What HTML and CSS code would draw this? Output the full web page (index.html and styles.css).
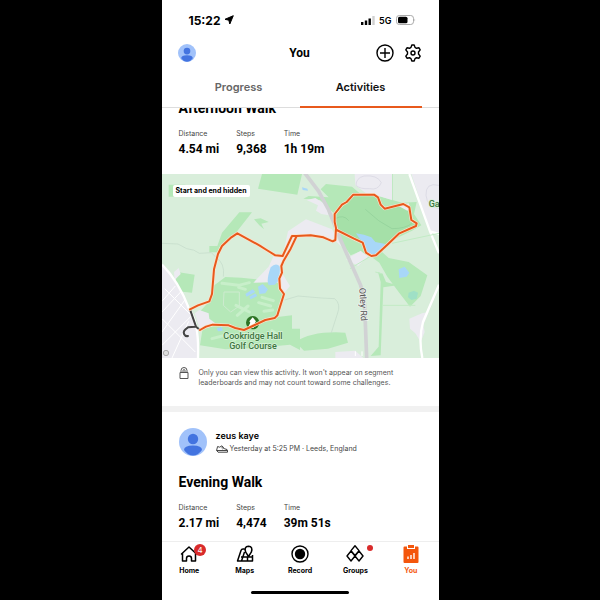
FILE: index.html
```
<!DOCTYPE html>
<html lang="en">
<head>
    <meta charset="UTF-8">
    <meta name="viewport" content="width=device-width, initial-scale=1.0">
    <title>You - Activities</title>
    <link rel="stylesheet" href="styles.css">
</head>
<body>
    <div class="phone">
        <header class="top">
            <div class="status-bar">
                <span class="clock">15:22
                    <svg width="10" height="10" viewBox="0 0 10 10"><path stroke="#000" stroke-linejoin="round" d="M9.300 .7 5.800 9 4.800 5.200 1 4.300z"/></svg>
                </span>
                <span class="signal">
                    <svg width="14" height="9" viewBox="0 0 14 9"><path d="M0 6h2.400v3H0zM3.800 4.500h2.400V9H3.800zM7.500 2.500h2.400V9H7.500z"/><path fill="#d0d0d0" d="M11.300 0h2.400v9h-2.400z"/></svg>
                    5G
                    <svg width="20" height="10" viewBox="0 0 20 10"><rect x=".5" y=".5" width="17" height="9" rx="2.800" fill="#fff" stroke="#aaa"/><rect x="2" y="1.700" width="9.500" height="6.600" rx="1.600"/><path fill="#999" d="M18.600 3.600q1.200 1.400 0 2.800z"/></svg>
                </span>
            </div>
            <div class="title-bar">
                <button class="icon-btn" aria-label="Profile">
                    <svg width="18" height="18" viewBox="0 0 28 28"><circle cx="14" cy="14" r="14" fill="#a1c2fa"/><circle cx="14" cy="11" r="5.200" fill="#4374e0"/><path fill="#4374e0" d="M5 22q0-4.500 9-4.500t9 4.500q-4 5.500-9 5.500t-9-5.500z"/></svg>
                </button>
                <h1>You</h1>
                <div class="actions">
                    <button class="icon-btn" aria-label="Add">
                        <svg width="18" height="18" viewBox="0 0 18 18" fill="none" stroke="#000" stroke-width="1.400"><circle cx="9" cy="9" r="8"/><path d="M9 4v10M4 9h10"/></svg>
                    </button>
                    <button class="icon-btn" aria-label="Settings">
                        <svg width="18" height="18" viewBox="0 0 18 18" fill="none" stroke="#000" stroke-width="1.400" stroke-linejoin="round"><path d="M7 3.400 7.800 1h2.400l.8 2.400 1.500.9 2.500-.5 1.200 2.100L14.500 8v2l1.700 2.100-1.200 2.100-2.500-.5-1.500.9-.8 2.400H7.800L7 14.600l-1.500-.9-2.500.5-1.200-2.100L3.500 10V8L1.800 5.900 3 3.800l2.500.5z"/><circle cx="9" cy="9" r="2"/></svg>
                    </button>
                </div>
            </div>
            <nav class="tabs">
                <a href="#progress">Progress</a>
                <a href="#activities" class="active">Activities</a>
            </nav>
        </header>

        <main class="feed">
            <article class="activity scrolled">
                <h2>Afternoon Walk</h2>
                <dl class="stats">
                    <div><dt>Distance</dt><dd>4.54 mi</dd></div>
                    <div><dt>Steps</dt><dd>9,368</dd></div>
                    <div><dt>Time</dt><dd>1h 19m</dd></div>
                </dl>
                <div class="map">
                    <svg viewBox="0 6 831 552">
                        <rect y="6" width="831" height="552" fill="#d9eedb"/>
                        <!-- woods and parks -->
                        <g fill="#b5e8b8">
                            <path d="M300 6H420L406 68 288 50zM20 38H70V74H20zM232 121H270L216 190 172 226 166 241H142V222H166L180 182zM276 142L296 139 320 150 298 155 306 172 292 160z"/>
                            <path d="M46 300L98 308 90 362 46 358 40 332zM150 345L190 315Q290 318 358 335V350L366 366 346 430 276 460 240 474 152 458 114 440 116 416 142 388z"/>
                            <path d="M122 468L152 458 200 460 246 474 280 460 340 436 390 430V470H414V534L384 518 280 528 190 532 114 520z"/>
                            <path d="M476 52L492 36 570 44 600 70 650 72 720 92 764 90 756 126 778 160 750 176 700 200 660 240 680 258 740 270 796 310 776 372 744 404 710 360 676 314 652 272 628 254 590 240 566 250 540 212 524 174 518 126 474 84 424 80 440 72 500 76z"/>
                            <path d="M400 510Q450 476 550 482L558 512 498 530 426 536zM626 552L650 524 656 330 648 300 662 306 672 330 706 340 664 346 656 550z"/>
                            <path d="M686 6H692V92H686z"/>
                        </g>
                        <path fill="#a5e0a8" d="M518 126L540 98 554 90 574 68H636L648 76 656 98 668 110 724 96 742 106 748 144 764 158 712 184 642 250 612 242 602 212 576 200 524 174z"/>
                        <path fill="none" stroke="#8fcf98" stroke-width="2" d="M520 140Q545 126 560 146M610 112L650 146 690 170Q730 170 750 154"/>
                        <g fill="none" stroke="#c8efca" stroke-width="9" stroke-linecap="round">
                            <path d="M180 334L230 340 262 332M300 376L334 386M230 346L250 352M222 400L262 420M290 392L326 402M258 402L226 430M306 418L332 414M150 500L188 490 218 504M330 476L352 492"/>
                        </g>
                        <path fill="none" stroke="#cdebcf" stroke-width="3" d="M186 360H232V402L206 420 184 400z"/>
                        <!-- built-up areas -->
                        <g fill="#ecebf1">
                            <path d="M0 278Q50 328 82 412L108 470V558H0zM98 424L112 414 140 424 142 440 166 458 114 474zM36 300L50 288 56 306 38 324z"/>
                            <path d="M378 178L432 142 510 172 540 226 522 208 484 196 446 190H406L362 268 358 300 384 342 366 364 352 348 350 330 274 332 320 284 336 250 362 252z"/>
                            <path d="M434 84L460 78 492 98 500 130 478 126 462 116 468 100zM578 6H690V84L650 72 610 62 580 40zM748 6H831V186L806 176 786 120zM552 262L596 236 618 254 588 282zM520 540L580 536 604 558H520zM706 100L740 94 746 110 736 116zM742 440L780 424 800 420 784 460 788 480 776 510 760 484 744 470z"/>
                        </g>
                        <path fill="none" stroke="#dddce6" stroke-width="3" d="M582 40Q582 18 606 12 646 8 658 32 648 56 622 50 594 52 582 40zM831 40Q790 30 792 70 796 106 831 110"/>
                        <!-- water -->
                        <g fill="#a8d7f8">
                            <path d="M326 286Q342 270 354 284L352 324 338 338 320 340Q312 326 326 286zM288 344L302 336 318 352 310 364 292 366zM250 366L272 352 280 360 254 374zM262 374L280 364 286 372 266 382zM164 468L180 466 182 476 168 478zM582 184L606 188 628 196 640 210 670 216 640 250 624 248 612 240 606 216 590 196zM710 292L728 284 742 302 734 314 712 318zM420 46L436 50 438 56 422 54z"/>
                            <path fill="#9fe0c6" d="M740 362L756 356 768 362 764 380 748 384 738 376z"/>
                        </g>
                        <!-- streets -->
                        <g fill="none" stroke="#fff" stroke-width="3">
                            <path d="M0 388L40 342M0 420L56 360M8 350L100 442M0 480L70 382M0 520L90 430M0 440L100 540M30 558L80 448M580 552V538M600 552V538"/>
                            <path stroke-width="7" d="M0 278Q50 328 82 412 112 452 108 558M742 6L804 178 831 244M804 178L831 186M831 338L783 450Q769 500 781 558"/>
                        </g>
                        <g fill="none" stroke="#c3d9c8" stroke-width="2">
                            <path d="M0 214L48 216 74 230Q98 232 112 244L148 242 160 254Q190 274 184 314M368 384L408 372 478 378 518 380Q538 396 526 426L508 482"/>
                        </g>
                        <g fill="none" stroke="#c2ebc5" stroke-width="3"><path d="M564 290L630 250M690 214L831 184M660 400H760M640 300L662 306"/></g>
                        <path fill="none" stroke="#d1d2d4" stroke-width="11" d="M426 0L470 58 500 114 536 204 596 340Q606 370 608 400L614 558"/>
                        <circle cx="272" cy="452" r="20" fill="#2d7424"/>
                        <path fill="#fff" d="M272 436L282 448 279 452 284 462H275V468H269V462H260L265 452 262 448z"/>
                        <g class="place">
                            <text x="273" y="500" text-anchor="middle">Cookridge Hall</text>
                            <text x="273" y="531" text-anchor="middle">Golf Course</text>
                            <text x="800" y="105">Ga</text>
                        </g>
                        <text class="road" transform="translate(592 348) rotate(87)">Otley Rd</text>
                        <!-- hidden start and end -->
                        <path class="hidden-part" d="M84 412L102 464 114 474M100 464L78 466Q62 476 66 486 70 494 78 492"/>
                        <!-- walked route, light casing under the line -->
                        <g class="casing"><use href="#route"/></g>
                        <g class="line">
                            <path id="route" d="M84 412L108 400 142 388 150 366 156 292 168 246 180 222 208 196 226 184 292 220 314 234 340 250 362 252 390 192H404L446 190 484 196 512 208 520 204 522 168 518 150V126L540 98 554 90 574 68H636L648 76 656 98 668 110 724 96 742 106 748 144 764 154 762 162 712 184 676 218 642 250 628 252 612 242 602 212 576 200 524 174M404 192L386 230 364 268 358 282 360 302 352 320 354 350 366 366 346 430 338 438 310 444 272 462 246 474 220 468 200 460 152 458 132 464 114 474"/>
                        </g>
                        <circle cx="12" cy="543" r="8" fill="#ddd" stroke="#aaa" stroke-width="3"/>
                    </svg>
                    <span class="map-label">Start and end hidden</span>
                </div>
                <div class="privacy">
                    <svg width="10" height="12" viewBox="0 0 10 12" fill="none" stroke="#555" stroke-width="1"><path d="M1 5.500h8v6H1zM2 5.500V3.500a3 3 0 0 1 6 0v2M4 5.500V3.600a1 1 0 0 1 2 0v1.900"/></svg>
                    <p>Only you can view this activity. It won't appear on segment leaderboards and may not count toward some challenges.</p>
                </div>
            </article>

            <article class="activity">
                <div class="athlete">
                    <svg width="28" height="28" viewBox="0 0 28 28"><circle cx="14" cy="14" r="14" fill="#a1c2fa"/><circle cx="14" cy="11" r="5.200" fill="#4374e0"/><path fill="#4374e0" d="M5 22q0-4.500 9-4.500t9 4.500q-4 5.500-9 5.500t-9-5.500z"/></svg>
                    <div>
                        <a class="name" href="#athlete">zeus kaye</a>
                        <p class="when">
                            <svg width="12" height="8" viewBox="0 0 12 8" fill="none" stroke="#333" stroke-width=".9" stroke-linejoin="round"><path d="M.6 5.300 1.600 1.500l2 .7L6 .8l2.300 2.900 2.700.8.500 1.300v1.400H2zM.6 5.500h10.900M5.500 2.800l1.300-.7M6.400 4l1.300-.8"/></svg>
                            Yesterday at 5:25 PM · Leeds, England
                        </p>
                    </div>
                </div>
                <h2>Evening Walk</h2>
                <dl class="stats">
                    <div><dt>Distance</dt><dd>2.17 mi</dd></div>
                    <div><dt>Steps</dt><dd>4,474</dd></div>
                    <div><dt>Time</dt><dd>39m 51s</dd></div>
                </dl>
            </article>
        </main>

        <footer class="bottom">
            <nav class="nav">
                <a href="#home">
                    <span class="nav-icon">
                        <svg width="18" height="18" viewBox="0 0 18 18" fill="none" stroke="#000" stroke-width="1.500" stroke-linejoin="round" stroke-linecap="round"><path d="M1.500 9 9 2l7.500 7M2.500 8.500V16h4v-2.500a2.500 2.500 0 0 1 5 0V16h4V8.500"/></svg>
                        <span class="badge">4</span>
                    </span>
                    Home
                </a>
                <a href="#maps">
                    <span class="nav-icon">
                        <svg width="18" height="18" viewBox="0 0 18 18" fill="none" stroke="#000" stroke-width="1.500" stroke-linejoin="round"><path d="M8.500 4H7Q5.500 4 5 5.500L1.500 16h15V10M5.500 16 8.500 7M5 12h11.500M11.500 16v-4M12.500 11.500 9.700 7.200Q7.800 1.600 12.500 1.300q4.700.3 2.800 5.900z"/></svg>
                    </span>
                    Maps
                </a>
                <a href="#record">
                    <span class="nav-icon">
                        <svg width="18" height="18" viewBox="0 0 18 18"><circle cx="9" cy="9" r="8" fill="none" stroke="#000" stroke-width="1.400"/><circle cx="9" cy="9" r="5.200"/></svg>
                    </span>
                    Record
                </a>
                <a href="#groups">
                    <span class="nav-icon">
                        <svg width="18" height="18" viewBox="0 0 18 18" fill="none" stroke="#000" stroke-width="1.400" stroke-linejoin="round"><path d="M9 .8 13 5.600 9 10.400 5 5.600zM5 6l4 5-4 5-4-5zM13 6l4 5-4 5-4-5z"/></svg>
                        <span class="dot"></span>
                    </span>
                    Groups
                </a>
                <a href="#you" class="active">
                    <span class="nav-icon">
                        <svg width="18" height="18" viewBox="0 0 18 18"><path fill="#f4560c" d="M2.500 1.500H5V4h8V1.500h2.500q1 0 1 1V17q0 1-1 1h-13q-1 0-1-1V2.500q0-1 1-1z"/><path fill="#f4560c" d="M6 0h6v3H6z"/><path stroke="#fff" stroke-width="1.400" d="M6 14v-2.500M9 14v-4M12 14V8"/></svg>
                    </span>
                    You
                </a>
            </nav>
            <div class="home-bar"></div>
        </footer>
    </div>
</body>
</html>
```
FILE: styles.css
```
* {
    box-sizing: border-box;
}
body {
    margin: 0;
    background-color: #000;
    font-family: Inter, "Liberation Sans", sans-serif;
    color: #000;
}
h1, h2, p, dl, dd {
    margin: 0;
}
a {
    color: inherit;
    text-decoration: none;
}
svg {
    display: block;
}
.phone {
    display: flex;
    flex-direction: column;
    width: 100%;
    max-width: 277px;
    height: 100vh;
    margin: 0 auto;
    background-color: #fff;
    overflow: hidden;
}
.top {
    padding-top: 11px;
    border-bottom: 1px solid #ddd;
}
.status-bar {
    display: flex;
    justify-content: space-between;
    align-items: center;
    height: 18px;
    padding: 0 23px 0 27px;
}
.clock, .signal {
    display: flex;
    align-items: center;
    gap: 4px;
    font-size: 12px;
    font-weight: 700;
}
.signal {
    font-size: 9px;
    font-weight: 600;
}
.title-bar {
    display: grid;
    grid-template-columns: 1fr auto 1fr;
    align-items: center;
    height: 47px;
    padding: 0 17px 0 16px;
}
h1, h2, .stats dd {
    font-family: Roboto, "Liberation Sans", sans-serif;
    font-weight: 700;
}
h1 {
    font-size: 12px;
}
.icon-btn {
    padding: 0;
    border: none;
    background: none;
    cursor: pointer;
}
.actions {
    display: flex;
    justify-content: flex-end;
    gap: 10px;
}
.tabs {
    display: flex;
    padding: 0 17px 0 16px;
    margin-bottom: -1px;
}
.tabs a {
    flex: 1;
    height: 32px;
    line-height: 23px;
    border-bottom: 2px solid transparent;
    font-size: 11px;
    font-weight: 600;
    text-align: center;
    color: #666;
}
.tabs .active {
    color: #111;
    border-color: #e8591c;
}
.feed {
    flex: 1;
    min-height: 0;
    overflow: hidden;
}
.activity {
    padding-top: 16px;
}
/* feed is scrolled past the first activity's header */
.scrolled {
    margin-top: -27px;
    border-bottom: 6px solid #f1f1f1;
}
h2 {
    padding: 0 17px;
    font-size: 14px;
    line-height: 22px;
}
.stats {
    display: flex;
    gap: 17px;
    padding: 9px 17px 0;
}
.stats dt {
    font-size: 7px;
    line-height: 12px;
    color: #444;
}
.stats dd {
    font-size: 12px;
    line-height: 18px;
}
.map {
    position: relative;
    margin-top: 16px;
}
.map svg {
    width: 100%;
}
.map-label {
    position: absolute;
    top: 11px;
    left: 11px;
    padding: 0 3px;
    border-radius: 2px;
    background-color: #fff;
    font-size: 7px;
    line-height: 12px;
    font-weight: 700;
}
.place, .road {
    font-family: Roboto, "Liberation Sans", sans-serif;
    font-size: 27px;
    stroke-width: 4px;
    paint-order: stroke;
}
.place {
    fill: #3d7540;
    stroke: #d9f3da;
    font-weight: 500;
}
.road {
    fill: #555;
    stroke: #f2f5f2;
}
.line, .casing, .hidden-part {
    fill: none;
    stroke-linejoin: round;
    stroke-linecap: round;
    stroke-width: 6px;
}
.line {
    stroke: #e8591c;
}
.casing {
    stroke: #fbe3cf;
    stroke-width: 10px;
}
/* the shared path takes its stroke from the group around it */
.hidden-part {
    stroke: #444;
}
.privacy {
    display: flex;
    gap: 10px;
    padding: 9px 17px 18px;
    font-size: 7px;
    line-height: 10px;
    color: #555;
}
.privacy svg {
    flex: none;
}
.privacy p {
    padding-top: 1px;
}
.athlete {
    display: flex;
    align-items: center;
    gap: 9px;
    padding: 0 17px;
    margin-bottom: 15px;
}
.name {
    display: block;
    font-size: 9px;
    line-height: 14px;
    font-weight: 600;
}
.when {
    display: flex;
    align-items: center;
    gap: 2px;
    font-size: 7px;
    line-height: 12px;
    color: #444;
}
.bottom {
    border-top: 1px solid #eee;
    padding: 3px 0 6px;
}
.nav {
    display: flex;
}
.nav a {
    flex: 1;
    display: flex;
    flex-direction: column;
    align-items: center;
    gap: 2px;
    font-size: 7px;
    line-height: 12px;
    font-weight: 700;
}
.nav .active {
    color: #f4560c;
}
.nav-icon {
    position: relative;
}
.badge {
    position: absolute;
    top: -1px;
    left: 14px;
    width: 12px;
    height: 12px;
    border-radius: 50%;
    background-color: #d92b2b;
    color: #fff;
    font-size: 8px;
    font-weight: 400;
    text-align: center;
}
.dot {
    position: absolute;
    top: 0;
    right: -9px;
    width: 6px;
    height: 6px;
    border-radius: 50%;
    background-color: #d92b2b;
}
.home-bar {
    width: 98px;
    height: 3px;
    margin: 14px auto 0;
    border-radius: 2px;
    background-color: #000;
}
```
